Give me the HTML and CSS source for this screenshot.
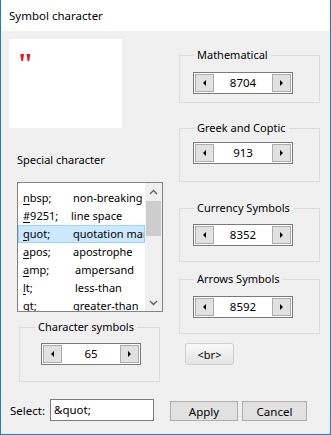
FILE: index.html
```html
<!DOCTYPE html>
<html>
<head>
<meta charset="utf-8">
<link rel="stylesheet" href="styles.css">
</head>
<body>
<div class="window">
  <div class="titlebar">Symbol character</div>
  <div class="content">
    <div class="columns">
      <div class="col-left">
        <div class="preview"><span class="glyph">"</span></div>
        <div class="label special-label">Special character</div>
        <div class="listbox">
          <div class="rows">
            <div class="row"><span class="key"><u>n</u>bsp;</span><span class="val">non-breaking space</span></div>
            <div class="row"><span class="key"><u>#</u>9251;</span><span class="val val-tight">line space</span></div>
            <div class="row selected"><span class="key"><u>q</u>uot;</span><span class="val">quotation mark</span></div>
            <div class="row"><span class="key"><u>a</u>pos;</span><span class="val">apostrophe</span></div>
            <div class="row"><span class="key"><u>a</u>mp;</span><span class="val val-wide">ampersand</span></div>
            <div class="row"><span class="key"><u>l</u>t;</span><span class="val val-wide">less-than</span></div>
            <div class="row"><span class="key"><u>g</u>t;</span><span class="val">greater-than</span></div>
          </div>
          <div class="scrollbar">
            <div class="sb-btn"><svg width="9" height="6" viewBox="0 0 9 6"><path d="M1 5 L4.5 1.5 L8 5" fill="none" stroke="#606060" stroke-width="1.3"/></svg></div>
            <div class="sb-track"><div class="sb-thumb"></div></div>
            <div class="sb-btn"><svg width="9" height="6" viewBox="0 0 9 6"><path d="M1 1 L4.5 4.5 L8 1" fill="none" stroke="#606060" stroke-width="1.3"/></svg></div>
          </div>
        </div>
        <fieldset class="group group-char">
          <legend>Character symbols</legend>
          <div class="spinner">
            <span class="spin-btn"><span class="tri-left"></span></span>
            <span class="spin-val">65</span>
            <span class="spin-btn"><span class="tri-right"></span></span>
          </div>
        </fieldset>
      </div>
      <div class="col-right">
        <fieldset class="group group-math">
          <legend>Mathematical</legend>
          <div class="spinner">
            <span class="spin-btn"><span class="tri-left"></span></span>
            <span class="spin-val">8704</span>
            <span class="spin-btn"><span class="tri-right"></span></span>
          </div>
        </fieldset>
        <fieldset class="group group-greek">
          <legend>Greek and Coptic</legend>
          <div class="spinner">
            <span class="spin-btn"><span class="tri-left"></span></span>
            <span class="spin-val">913</span>
            <span class="spin-btn"><span class="tri-right"></span></span>
          </div>
        </fieldset>
        <fieldset class="group group-currency">
          <legend>Currency Symbols</legend>
          <div class="spinner">
            <span class="spin-btn"><span class="tri-left"></span></span>
            <span class="spin-val">8352</span>
            <span class="spin-btn"><span class="tri-right"></span></span>
          </div>
        </fieldset>
        <fieldset class="group group-arrows">
          <legend>Arrows Symbols</legend>
          <div class="spinner">
            <span class="spin-btn"><span class="tri-left"></span></span>
            <span class="spin-val">8592</span>
            <span class="spin-btn"><span class="tri-right"></span></span>
          </div>
        </fieldset>
        <button class="br-btn">&lt;br&gt;</button>
      </div>
    </div>
    <div class="bottom">
      <span class="select-label">Select:</span>
      <div class="input">&amp;quot;</div>
      <button class="btn btn-apply">Apply</button>
      <button class="btn btn-cancel">Cancel</button>
    </div>
  </div>
</div>
</body>
</html>
```
FILE: styles.css
```css
html, body {
  margin: 0;
  padding: 0;
  overflow: hidden;
}
body {
  font-family: "Noto Sans", "Open Sans", sans-serif;
  font-size: 11px;
  color: #000;
  background: #f0f0f0;
}
.window {
  width: 331px;
  height: 435px;
  box-sizing: border-box;
  border: 1px solid #1a7ed4;
  border-top: none;
  background: #f0f0f0;
  display: flex;
  flex-direction: column;
}
.titlebar {
  height: 31px;
  flex: none;
  background: #fff;
  line-height: 31px;
  padding-left: 8px;
  font-size: 11.5px;
}
.content {
  padding: 0 0 0 8px;
  flex: 1;
}
.columns {
  display: flex;
}
.col-left {
  width: 155px;
  display: flex;
  flex-direction: column;
}
.col-right {
  margin-left: 15px;
  width: 142px;
  display: flex;
  flex-direction: column;
  align-items: flex-start;
}
.preview {
  margin-top: 8px;
  width: 113px;
  height: 89px;
  background: #fff;
  box-sizing: border-box;
  padding: 9px 0 0 8px;
}
.glyph {
  font-family: "Liberation Serif", serif;
  font-weight: bold;
  font-size: 30px;
  line-height: 30px;
  color: #e3141c;
  display: block;
}
.label {
  line-height: 16px;
}
.special-label {
  margin: 24px 0 0 8px;
}
.listbox {
  margin: 14px 0 0 8px;
  width: 146px;
  height: 130px;
  box-sizing: border-box;
  border: 1px solid #828282;
  background: #fff;
  display: flex;
  overflow: hidden;
}
.rows {
  flex: 1;
  min-width: 0;
  padding-top: 6px;
  overflow: hidden;
}
.row {
  height: 18px;
  line-height: 16px;
  display: grid;
  grid-template-columns: 50px 1fr;
  padding-left: 4px;
  border: 1px solid transparent;
  box-sizing: border-box;
  white-space: nowrap;
  overflow: hidden;
}
.row.selected {
  background: #cce8ff;
  border-color: #99d1ff;
}
.key u {
  text-decoration-thickness: 1px;
  text-underline-offset: 2px;
}
.val {
  overflow: hidden;
}
.val-tight {
  margin-left: -2px;
}
.val-wide {
  margin-left: 2px;
}
.scrollbar {
  width: 17px;
  flex: none;
  background: #f0f0f0;
  display: flex;
  flex-direction: column;
}
.sb-btn {
  height: 17px;
  display: flex;
  align-items: center;
  justify-content: center;
}
.sb-track {
  flex: 1;
}
.sb-thumb {
  height: 35px;
  background: #cdcdcd;
  margin: 1px 1px 0 1px;
}
.group {
  margin: 0;
  border: 1px solid #dcdcdc;
  padding: 0 0 15px 13px;
  min-width: 0;
  width: 141px;
  box-sizing: border-box;
}
.group legend {
  padding: 0 3px;
  margin-left: 1px;
  line-height: 16px;
}
.group .spinner {
  margin-top: 8px;
}
.group-math {
  margin-top: 16px;
  padding-bottom: 8px;
}
.group-math .spinner {
  margin-top: 9px;
}
.group-greek {
  margin-top: 17px;
  padding-bottom: 17px;
}
.group-greek .spinner {
  margin-top: 6px;
}
.group-currency {
  margin-top: 18px;
}
.group-arrows {
  margin-top: 9px;
}
.group-arrows .spinner {
  margin-top: 9px;
}
.group-char {
  margin: 7px 0 0 10px;
  padding-left: 21px;
  padding-bottom: 16px;
}
.group-char legend {
  margin-left: -6px;
}
.spinner {
  width: 100px;
  height: 22px;
  box-sizing: border-box;
  border: 1px solid #7a7a7a;
  background: #fff;
  padding: 1px;
  display: flex;
  align-items: stretch;
}
.spin-btn {
  width: 19px;
  box-sizing: border-box;
  background: #e1e1e1;
  border: 1px solid #adadad;
  display: flex;
  align-items: center;
  justify-content: center;
}
.spin-val {
  flex: 1;
  text-align: center;
  line-height: 18px;
  font-size: 11.5px;
}
.tri-left {
  width: 0;
  height: 0;
  border-top: 3px solid transparent;
  border-bottom: 3px solid transparent;
  border-right: 3px solid #000;
}
.tri-right {
  width: 0;
  height: 0;
  border-top: 3px solid transparent;
  border-bottom: 3px solid transparent;
  border-left: 3px solid #000;
}
.br-btn {
  margin: 9px 0 0 6px;
  width: 49px;
  height: 22px;
  padding: 0;
  font-family: inherit;
  font-size: 11px;
  border: 1px solid #d0d0d0;
  border-radius: 3px;
  background: linear-gradient(#f9f9f9, #e3e3e3);
  color: #000;
}
.bottom {
  margin-top: 17px;
  display: flex;
  align-items: center;
  height: 22px;
}
.select-label {
  margin-left: 1px;
  width: 40px;
  font-size: 11.5px;
}
.input {
  width: 104px;
  height: 22px;
  box-sizing: border-box;
  border: 1px solid #7a7a7a;
  background: #fff;
  padding-left: 3px;
  line-height: 20px;
  font-size: 11.5px;
}
.btn {
  height: 20px;
  padding: 0;
  box-sizing: border-box;
  border: 1px solid #adadad;
  background: #e1e1e1;
  font-family: inherit;
  font-size: 11.5px;
  color: #000;
  margin-top: 2px;
}
.btn-apply {
  margin-left: 16px;
  width: 68px;
}
.btn-cancel {
  margin-left: 4px;
  width: 65px;
}
```
